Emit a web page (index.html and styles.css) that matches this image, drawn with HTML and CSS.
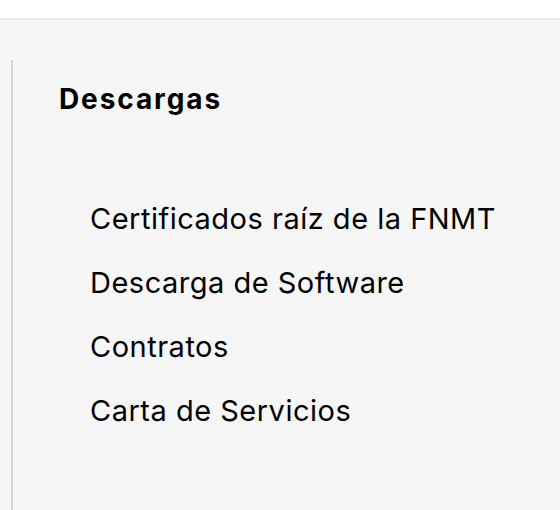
FILE: index.html
```html
<!DOCTYPE html>
<html lang="es">
<head>
<meta charset="UTF-8" />
<meta name="viewport" content="width=device-width, initial-scale=1.0"/>
<title>Descargas</title>
<link rel="stylesheet" href="styles.css">
</head>
<body>

<div class="topbar"></div>

<main class="content">
<aside class="sidebar">
<h2 class="sidebar-title">Descargas</h2>
<ul class="sidebar-links">
<li><a href="#">Certificados raíz de la FNMT</a></li>
<li><a href="#">Descarga de Software</a></li>
<li><a href="#">Contratos</a></li>
<li><a href="#">Carta de Servicios</a></li>
</ul>
</aside>
</main>

</body>
</html>
```

FILE: styles.css
```css
* { box-sizing: border-box; }
body {
margin: 0;
background-color: #f6f6f6;
color: #000;
font-family: Inter, 'Noto Sans', sans-serif;
}
.topbar {
height: 20px;
background-color: #fff;
border-bottom: 2px solid #e8e8e8;
}
.content {
padding: 40px 0 0 11px;
}
.sidebar {
border-left: 2px solid #d4d4d4;
padding: 22px 0 0 46px;
min-height: calc(100vh - 60px);
}
.sidebar-title {
margin: 0;
font-size: 28px;
font-weight: 700;
letter-spacing: 1.9px;
line-height: 34px;
}
.sidebar-links {
list-style: none;
margin: 71px 0 0;
padding: 0 0 0 31px;
font-size: 29px;
letter-spacing: 0.5px;
}
.sidebar-links li {
line-height: 64px;
}
.sidebar-links a {
color: #000;
text-decoration: none;
}
```
